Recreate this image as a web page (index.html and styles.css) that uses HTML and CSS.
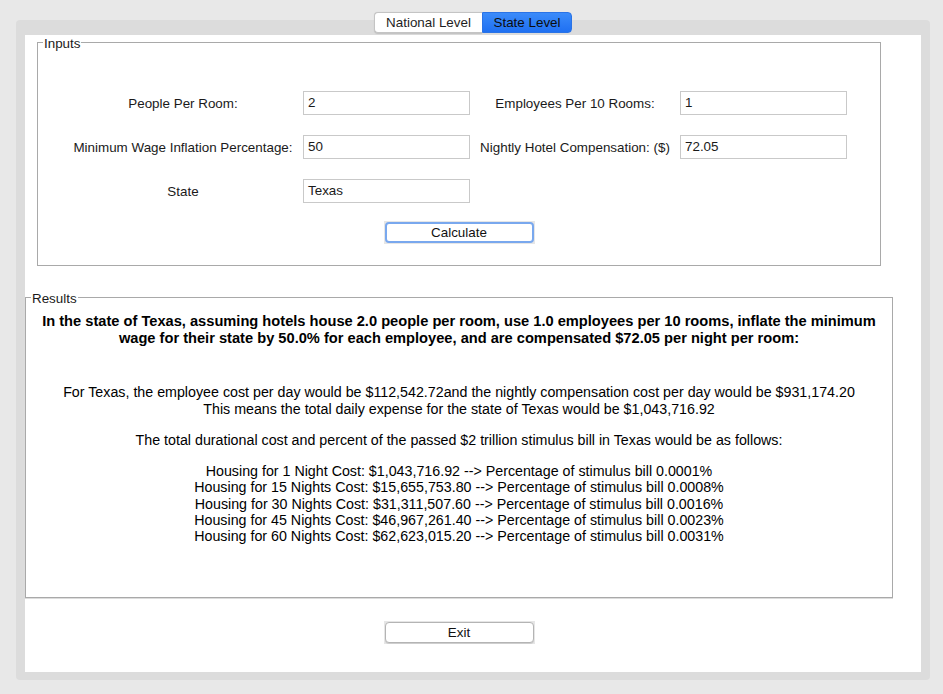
FILE: index.html
```html
<!DOCTYPE html>
<html>
<head>
<meta charset="utf-8">
<link rel="stylesheet" href="styles.css">
</head>
<body>
<div class="window">
  <div class="tabs">
    <div class="tab">National Level</div>
    <div class="tab active">State Level</div>
  </div>
  <div class="panel">
    <div class="content">
      <div class="column">
        <div class="group inputs">
          <div class="group-title">Inputs</div>
          <div class="form">
            <div class="label">People Per Room:</div>
            <div class="field">2</div>
            <div class="label">Employees Per 10 Rooms:</div>
            <div class="field">1</div>
            <div class="label">Minimum Wage Inflation Percentage:</div>
            <div class="field">50</div>
            <div class="label">Nightly Hotel Compensation: ($)</div>
            <div class="field">72.05</div>
            <div class="label">State</div>
            <div class="field">Texas</div>
          </div>
          <div class="btn-row calc-row">
            <div class="btn-wrap"><div class="btn focused">Calculate</div></div>
          </div>
        </div>
        <div class="group results">
          <div class="group-title">Results</div>
          <div class="res-head">In the state of Texas, assuming hotels house 2.0 people per room, use 1.0 employees per 10 rooms, inflate the minimum<br>wage for their state by 50.0% for each employee, and are compensated $72.05 per night per room:</div>
          <div class="res-p p1">For Texas, the employee cost per day would be $112,542.72and the nightly compensation cost per day would be $931,174.20<br>This means the total daily expense for the state of Texas would be $1,043,716.92</div>
          <div class="res-p p2">The total durational cost and percent of the passed $2 trillion stimulus bill in Texas would be as follows:</div>
          <div class="res-p p3">Housing for 1 Night Cost: $1,043,716.92 --&gt; Percentage of stimulus bill 0.0001%<br>Housing for 15 Nights Cost: $15,655,753.80 --&gt; Percentage of stimulus bill 0.0008%<br>Housing for 30 Nights Cost: $31,311,507.60 --&gt; Percentage of stimulus bill 0.0016%<br>Housing for 45 Nights Cost: $46,967,261.40 --&gt; Percentage of stimulus bill 0.0023%<br>Housing for 60 Nights Cost: $62,623,015.20 --&gt; Percentage of stimulus bill 0.0031%</div>
        </div>
        <div class="btn-row exit-row">
          <div class="btn-wrap"><div class="btn">Exit</div></div>
        </div>
      </div>
    </div>
  </div>
</div>
</body>
</html>
```
FILE: styles.css
```css
html, body {
  margin: 0;
  padding: 0;
  background: #e8e8e8;
}
body {
  font-family: "Liberation Sans", Arial, sans-serif;
  font-size: 13px;
  color: #1a1a1a;
  width: 943px;
  height: 694px;
  overflow: hidden;
}
.window {
  padding: 12px 13px 0 16px;
}
.tabs {
  display: flex;
  position: relative;
  z-index: 1;
  height: 21px;
  margin-left: 358px;
  width: 198px;
}
.tab {
  box-sizing: border-box;
  height: 21px;
  line-height: 19px;
  text-align: center;
  font-size: 13.4px;
  color: #1e1e1e;
}
.tab:first-child {
  width: 108px;
  background: #ffffff;
  border: 1px solid #c4c4c4;
  border-right: none;
  border-radius: 4px 0 0 4px;
  box-shadow: 0 0.5px 1px rgba(0,0,0,0.12);
}
.tab.active {
  width: 90px;
  background: linear-gradient(#3b8bfa, #1f70f2);
  border: 1px solid #2a73e6;
  border-radius: 0 4px 4px 0;
  color: #0c0c0c;
}
.panel {
  margin-top: -13px;
  width: 914px;
  height: 660px;
  box-sizing: border-box;
  background: #dcdcdc;
  border-radius: 4px;
  padding: 15px 9px 8px 9px;
}
.content {
  background: #ffffff;
  height: 637px;
  width: 896px;
  overflow: hidden;
}
.column {
  width: 868px;
  padding-top: 7px;
}
.group {
  border: 1px solid #a9a9a9;
  box-sizing: border-box;
}
.group-title {
  display: block;
  width: max-content;
  background: #ffffff;
  line-height: 15px;
  height: 15px;
  font-size: 13.4px;
  padding: 0 1px;
  margin-top: -7px;
  margin-left: 5px;
  color: #1a1a1a;
}
.inputs {
  margin: 0 12px;
  height: 224px;
}
.form {
  display: grid;
  grid-template-columns: 240px 167px 210px 167px;
  grid-auto-rows: 24px;
  row-gap: 20px;
  margin-top: 40px;
  margin-left: 25px;
}
.label {
  display: flex;
  align-items: center;
  justify-content: center;
  font-size: 13.4px;
  white-space: nowrap;
}
.field {
  box-sizing: border-box;
  border: 1px solid #c9c9c9;
  background: #fff;
  padding-left: 4px;
  line-height: 22px;
  font-size: 13.4px;
  color: #1a1a1a;
}
.btn-row {
  display: flex;
  justify-content: center;
}
.calc-row {
  margin-top: 18px;
}
.btn-wrap {
  background: #e6e6e6;
  padding: 1px 1px;
}
.btn {
  box-sizing: border-box;
  width: 149px;
  height: 21px;
  line-height: 19px;
  text-align: center;
  background: #ffffff;
  border: 1px solid #b4b4b4;
  border-radius: 4px;
  font-size: 13.4px;
  color: #111;
  box-shadow: 0 1px 0 rgba(0,0,0,0.1);
}
.btn.focused {
  border: 2px solid #79a8ee;
  line-height: 17px;
  box-shadow: none;
}
.results {
  margin-top: 31px;
  height: 301px;
  text-align: center;
  box-shadow: 0 1px 0 #dcdcdc;
}
.res-head {
  font-weight: bold;
  font-size: 14.65px;
  line-height: 17px;
  margin-top: 7px;
  color: #000;
}
.res-p {
  font-size: 14.25px;
  color: #000;
}
.p1 {
  margin-top: 37px;
  line-height: 17px;
}
.p2 {
  margin-top: 14px;
  line-height: 17px;
}
.p3 {
  margin-top: 14px;
  line-height: 16.25px;
}
.exit-row {
  margin-top: 23px;
}
```
